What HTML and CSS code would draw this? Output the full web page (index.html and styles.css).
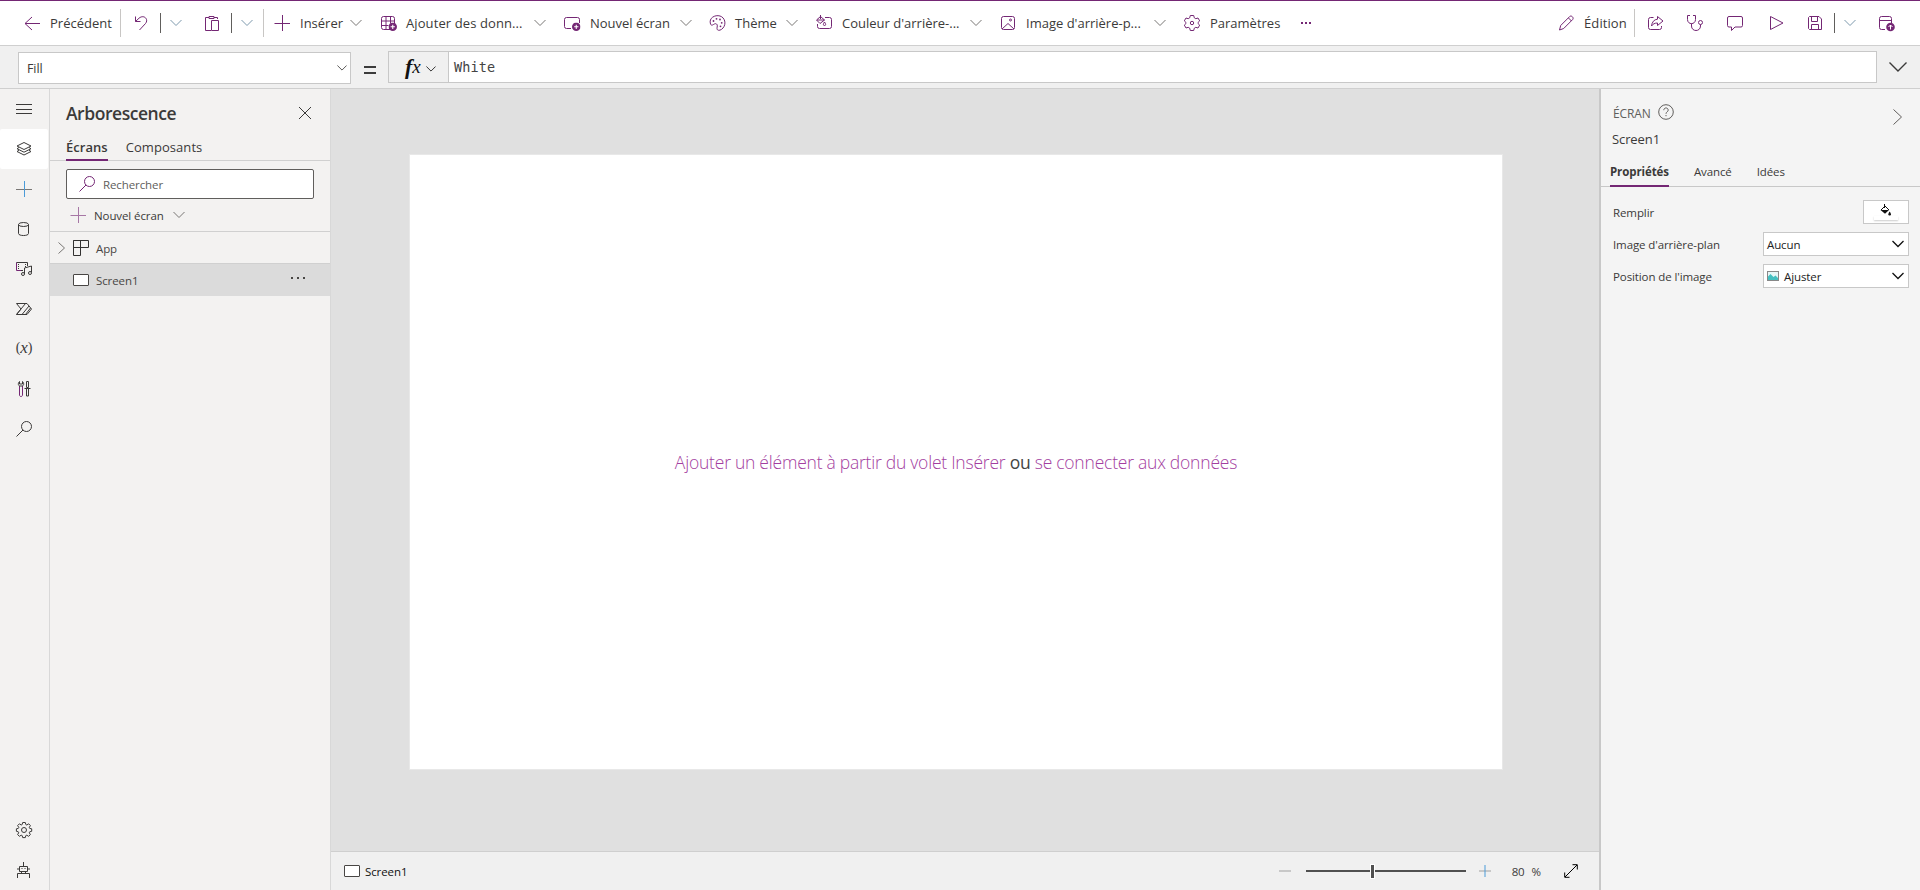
FILE: index.html
```
<!DOCTYPE html>
<html lang="fr">
<head>
    <meta charset="UTF-8">
    <meta name="viewport" content="width=device-width, initial-scale=1.0">
    <title>Power Apps Studio</title>
    <link rel="stylesheet" href="styles.css">
</head>
<body>
    <svg class="sprite">
        <symbol id="chevron" viewBox="0 0 12 12"><path d="M.5 3 6 8.500 11.500 3"/></symbol>
        <symbol id="plus" viewBox="0 0 16 16"><path d="M8.500 0v16M.5 8.500h16"/></symbol>
        <symbol id="search" viewBox="0 0 16 16"><circle cx="10.500" cy="5.500" r="5"/><path d="M7 9 .5 15.500"/></symbol>
        <symbol id="badge" viewBox="0 0 8 8"><circle cx="4" cy="4" r="4" fill="#742774" stroke="none"/><path d="M4 2v4M2 4h4" stroke="#fff"/></symbol>
    </svg>

    <div class="toolbar">
        <div class="cmd cmd-back">
            <svg class="icon"><path d="M16 8.500H1M8 2 1 8.500 8 15"/></svg>
            <span>Précédent</span>
        </div>
        <div class="sep"></div>
        <svg class="icon icon-undo"><path d="M2.500 1.500v5h5M2.500 6.500 6 3.200C11-1 16 4.500 12.500 8.500L6.500 15"/></svg>
        <div class="sep-dark"></div>
        <svg class="chev chev-blue"><use href="#chevron"/></svg>
        <svg class="icon icon-paste"><path d="M5 2.500H1.500v13H7M10 2.500h3.500V4M5 1.500h5v2H5zM7.500 5.500h7v10h-7z"/></svg>
        <div class="sep-dark"></div>
        <svg class="chev chev-blue"><use href="#chevron"/></svg>
        <div class="sep sep-insert"></div>
        <div class="cmd cmd-insert">
            <svg class="icon"><use href="#plus"/></svg>
            <span>Insérer</span>
            <svg class="chev"><use href="#chevron"/></svg>
        </div>
        <div class="cmd cmd-data">
            <svg class="icon"><rect x=".5" y="1.500" width="13" height="13" rx="2"/><path d="M5 1.500v13M9.500 1.500v7M.5 6h13M.5 10.500h7"/><use href="#badge" x="7.500" y="7.500" width="8.500" height="8.500"/></svg>
            <span>Ajouter des donn...</span>
            <svg class="chev"><use href="#chevron"/></svg>
        </div>
        <div class="cmd cmd-screen">
            <svg class="icon"><path d="M7 13.500H2.500a2 2 0 0 1-2-2v-7a2 2 0 0 1 2-2h11a2 2 0 0 1 2 2V8"/><use href="#badge" x="8" y="7.500" width="8.500" height="8.500"/></svg>
            <span>Nouvel écran</span>
            <svg class="chev"><use href="#chevron"/></svg>
        </div>
        <div class="cmd cmd-theme">
            <svg class="icon"><path d="M1.500 9C-.5 3 6-.5 11 1c5 1.500 6.500 8 3 12-2.500 3-6 3-6 .5 0-2 1-3.500-.5-4.500S5 9.500 3.500 10c-1 .3-1.700 0-2-1z"/><g class="dots"><circle cx="4.500" cy="6" r=".9"/><circle cx="7.500" cy="3.800" r=".9"/><circle cx="11" cy="4.500" r=".9"/><circle cx="12.700" cy="7.800" r=".9"/><circle cx="11.500" cy="11.300" r=".9"/></g></svg>
            <span>Thème</span>
            <svg class="chev"><use href="#chevron"/></svg>
        </div>
        <div class="cmd cmd-color">
            <svg class="icon"><path d="M9 2.500h4.500a2 2 0 0 1 2 2v7a2 2 0 0 1-2 2h-10a2 2 0 0 1-2-2V9M4.500 0v4M4.500 1.500 .5 5l3.500 3.500L8.500 5zM1 5h7.500M8.500 7c-1.500 2-1.500 3.500 0 3.500s1.500-1.500 0-3.500z"/></svg>
            <span>Couleur d'arrière-...</span>
            <svg class="chev"><use href="#chevron"/></svg>
        </div>
        <div class="cmd cmd-image">
            <svg class="icon"><rect x="1.500" y="1.500" width="13" height="13" rx="2"/><path d="m2 14 6-5.500 6 5.500"/><circle cx="10.500" cy="5" r="1"/></svg>
            <span>Image d'arrière-p...</span>
            <svg class="chev"><use href="#chevron"/></svg>
        </div>
        <div class="cmd cmd-settings">
            <svg class="icon"><path d="M6.300.5h3.400l.6 2.300 1.500.9 2.200-.7 1.700 2.900-1.700 1.600v1l1.700 1.600-1.700 2.900-2.200-.7-1.500.9-.6 2.300H6.300l-.6-2.300-1.500-.9-2.200.7L.3 10.100 2 8.500v-1L.3 5.900 2 3l2.200.7 1.500-.9z"/><circle cx="8" cy="8" r="1.700"/></svg>
            <span>Paramètres</span>
        </div>
        <svg class="more" viewBox="0 0 10 2"><path d="M0 1h2M4 1h2M8 1h2"/></svg>

        <div class="toolbar-right">
            <div class="cmd cmd-edit">
                <svg class="icon"><path d="m1.500 15 1.200-4.500 9-9c1.500-1.500 4.500 1 3 3l-9 9zM10.500 3l3 3"/></svg>
                <span>Édition</span>
            </div>
            <div class="sep"></div>
            <svg class="icon icon-share"><path d="M5.500 2.500h-3a2 2 0 0 0-2 2v8a2 2 0 0 0 2 2h9a2 2 0 0 0 2-2V11M9.500 1.500 15 6l-5.500 4.500V8C6.500 8 5 9 3.500 11 4 7 6 4.500 9.500 4.200z"/></svg>
            <svg class="icon icon-check"><path d="M3 .5H.5v4C.5 10 8.500 10 8.500 4.500v-4H6M4.500 8.500V11c0 6 9 6 9 0V9.500"/><circle cx="13.500" cy="7.500" r="2"/></svg>
            <svg class="icon icon-comment"><path d="M2 1.500h12A1.500 1.500 0 0 1 15.500 3v7.500A1.500 1.500 0 0 1 14 12H8l-3.500 3.500V12H2A1.500 1.500 0 0 1 .5 10.500V3A1.500 1.500 0 0 1 2 1.500z"/></svg>
            <svg class="icon icon-play"><path d="M2.500 1.500v13l12.500-6.500z"/></svg>
            <svg class="icon icon-save"><path d="M2.500 1.500h9.500l2.500 2.500v10.500h-12l-1-1v-11zM4.500 1.500v5h6v-5M4.500 14.500v-5h7v5"/></svg>
            <div class="sep-dark"></div>
            <svg class="chev chev-blue"><use href="#chevron"/></svg>
            <svg class="icon icon-publish"><path d="M7 14.500H3.500a2 2 0 0 1-2-2v-9a2 2 0 0 1 2-2h8a2 2 0 0 1 2 2V8M1.500 5.500h12"/><circle cx="12.500" cy="12" r="4.300" fill="#742774" stroke="none"/><path d="M12.500 14.500V10m-2 2 2-2 2 2" stroke="#fff"/></svg>
        </div>
    </div>

    <div class="formula-bar">
        <div class="property-select">
            <span>Fill</span>
            <svg class="chev-small" viewBox="0 0 12 12"><use href="#chevron"/></svg>
        </div>
        <svg class="equal" viewBox="0 0 12 8"><path d="M0 1h12M0 7h12"/></svg>
        <div class="fx"><i>f</i><em>x</em><svg class="chev-small" viewBox="0 0 12 12"><use href="#chevron"/></svg></div>
        <div class="formula">White</div>
        <svg class="expand-formula" viewBox="0 0 18 10"><path d="m.5.500 8.500 8.500L17.500.500"/></svg>
    </div>

    <div class="main">
        <div class="rail">
            <div class="rail-item"><svg class="icon"><path d="M0 3.500h16M0 8.500h16M0 12.500h16"/></svg></div>
            <div class="rail-item active"><svg class="icon"><path d="m8 1.500 7 3.500-7 3.500L1 5zM3 6.500 1 7.700l7 3.500 7-3.500-2-1.200M3 9.300l-2 1.200L8 14l7-3.500-2-1.200"/></svg></div>
            <div class="rail-item"><svg class="icon rail-plus"><path d="M0 8.500h16"/><path class="blue" d="M8.500 0v16"/></svg></div>
            <div class="rail-item"><svg class="icon"><path d="M2.500 3.500v9c0 2.700 10 2.700 10 0v-9"/><ellipse cx="7.500" cy="3.500" rx="5" ry="2"/></svg></div>
            <div class="rail-item"><svg class="icon"><path class="purple" d="M5 9.500H.5v-8"/><path d="M.5 1.500h11V5M5 9.500h2M8.500 13V7l7-2v6"/><path stroke-dasharray="1 1" d="M2.500 3v6M9.500 3v3"/><circle cx="7" cy="13" r="1.500"/><circle cx="14" cy="12" r="1.500"/></svg></div>
            <div class="rail-item"><svg class="icon"><path d="M.5 2.500H11L15.500 8 11 13.500H.5L5 8zM.5 13.500l9-11M6 13.500 13 5M9.500 13.500l5-6.500"/></svg></div>
            <div class="rail-item variable">(<i>x</i>)</div>
            <div class="rail-item"><svg class="icon"><path class="purple" d="M3.500 5v9c0 2 3 2 3 0V5"/><path d="M3.500.5c-2 2-1.200 4.500.5 4.500h2c1.700 0 2.500-2.500.5-4.500V3h-3zM10.500.500h2v6h-2zM8.500 7.500h6M10.500 8v7h2V8"/></svg></div>
            <div class="rail-item"><svg class="icon"><use href="#search"/></svg></div>
            <div class="rail-item rail-bottom"><svg class="icon"><path d="m6.700.5 2.600 0 .5 2 1 .5 1.900-1.200 1.700 1.800-1.100 1.800.4 1 2 .4v2.500l-2 .5-.4 1 1.100 1.800-1.800 1.700-1.800-1.100-1 .4-.5 2H6.700l-.5-2-1-.4-1.800 1.100-1.800-1.700 1.100-1.800-.4-1-1.900-.5V6.800l1.900-.4.5-1-1.200-1.800L3.400 1.800 5.200 3l1-.5z"/><circle cx="8" cy="8" r="2.500"/></svg></div>
            <div class="rail-item"><svg class="icon"><path d="M3.500 4.500h8v5h-8zM7.500 0v4M1.500 16v-4.500h12V16M5.500 9.500v2M9.500 9.500v2M2 6v2M13 6v2M5.500 6.500h1M8.500 6.500h1"/></svg></div>
        </div>

        <div class="tree">
            <div class="tree-header">
                <h2>Arborescence</h2>
                <svg class="close" viewBox="0 0 12 12"><path d="m0 0 12 12M12 0 0 12"/></svg>
            </div>
            <div class="tree-tabs">
                <div class="tab selected">Écrans</div>
                <div class="tab">Composants</div>
            </div>
            <div class="search-box">
                <svg class="icon"><use href="#search"/></svg>
                <span>Rechercher</span>
            </div>
            <div class="new-screen">
                <svg class="icon"><use href="#plus"/></svg>
                <span>Nouvel écran</span>
                <svg class="chev"><use href="#chevron"/></svg>
            </div>
            <div class="tree-row">
                <svg class="caret" viewBox="0 0 7 12"><path d="m.5.500 6 5.500-6 5.500"/></svg>
                <svg class="icon"><path d="M.5.500h15v7H.5zM7.500.5v15h-7V.5"/></svg>
                <span>App</span>
            </div>
            <div class="tree-row tree-selected">
                <div class="screen-icon"></div>
                <span>Screen1</span>
                <svg class="more" viewBox="0 0 14 2"><path d="M0 1h2M6 1h2M12 1h2"/></svg>
            </div>
        </div>

        <div class="workspace">
            <div class="stage">
                <div class="canvas">
                    <p><span class="link">Ajouter un élément à partir du volet Insérer</span> <span class="or">ou</span> <span class="link">se connecter aux données</span></p>
                </div>
            </div>
            <div class="status">
                <div class="screen-icon"></div>
                <span class="status-name">Screen1</span>
                <svg class="zoom-out" viewBox="0 0 12 12"><path d="M0 6h12"/></svg>
                <div class="slider"><div class="thumb"></div></div>
                <svg class="zoom-in" viewBox="0 0 12 12"><path d="M0 6h12"/><path class="blue" d="M6 0v12"/></svg>
                <span class="percent">80</span><span>%</span>
                <svg class="fit" viewBox="0 0 14 14"><path d="M1 13 13 1M8.500.700h4.800v4.800M.7 8.500v4.800h4.800"/></svg>
            </div>
        </div>

        <div class="props">
            <div class="props-type">
                <span>ÉCRAN</span>
                <svg class="help" viewBox="0 0 16 16"><circle cx="8" cy="8" r="7.300"/><path d="M5.800 6.200c0-3 4.400-3 4.400 0C10.200 7.800 8 7.800 8 9.800M8 11v1.200"/></svg>
                <svg class="collapse" viewBox="0 0 9 16"><path d="m.5.500 8 7.500-8 7.500"/></svg>
            </div>
            <div class="props-name">Screen1</div>
            <div class="props-tabs">
                <div class="tab selected">Propriétés</div>
                <div class="tab">Avancé</div>
                <div class="tab">Idées</div>
            </div>
            <div class="prop">
                <span>Remplir</span>
                <div class="fill-button">
                    <svg viewBox="0 0 12 12"><path d="M4.500 0v4M1 6l4-4 4 4" fill="none"/><path class="solid" d="M.5 6h8.500L5 9.800zM9.700 7.500c-2.200 3-1.500 4 0 4s2-1 0-4z"/></svg>
                    <div class="swatch"></div>
                </div>
            </div>
            <div class="prop">
                <span>Image d'arrière-plan</span>
                <div class="select">Aucun<svg class="chev"><use href="#chevron"/></svg></div>
            </div>
            <div class="prop">
                <span>Position de l'image</span>
                <div class="select">
                    <svg class="picture" viewBox="0 0 12 10"><rect x=".5" y=".5" width="11" height="9" fill="#e6f6f7" stroke="#888"/><path d="M1 5.500 3.500 3l3 3 2-1.500L11 7v2H1z" fill="#43bfc0" stroke="none"/></svg>
                    Ajuster<svg class="chev"><use href="#chevron"/></svg>
                </div>
            </div>
        </div>
    </div>
</body>
</html>
```
FILE: styles.css
```
* {
    box-sizing: border-box;
}
body {
    display: flex;
    flex-direction: column;
    height: 100vh;
    margin: 0;
    overflow: hidden;
    background-color: #f3f2f1;
    color: #3b3a39;
    font-family: "Open Sans", "Noto Sans", sans-serif;
    font-size: 11.5px;
    letter-spacing: -0.1px;
    white-space: nowrap;
}
svg {
    display: block;
    flex: none;
    fill: none;
    stroke: currentColor;
}
.sprite {
    position: absolute;
    width: 0;
    height: 0;
}
.icon {
    width: 16px;
    height: 16px;
    overflow: visible;
}
.chev {
    width: 12px;
    height: 12px;
    color: #797775;
}
.chev-blue {
    color: #7c98ac;
}
.blue {
    stroke: #4a9bd8;
}
.purple {
    stroke: #742774;
}
.dots {
    fill: currentColor;
    stroke: none;
}

/* command bar */
.toolbar {
    display: flex;
    align-items: center;
    flex: none;
    height: 46px;
    border-top: 1px solid #742774;
    border-bottom: 1px solid #cfcfcf;
    background-color: #fff;
}
.toolbar .icon, .toolbar .more {
    color: #742774;
}
.cmd {
    display: flex;
    align-items: center;
    flex: none;
    font-size: 13px;
    letter-spacing: 0;
}
.cmd span {
    margin-left: 10px;
}
.cmd .chev {
    margin-left: auto;
}
.cmd-back {
    width: 88px;
    margin-left: 24px;
}
.cmd-insert {
    width: 88px;
    margin-left: 10px;
}
.cmd-data {
    width: 165px;
    margin-left: 19px;
}
.cmd-data span {
    margin-left: 9px;
    letter-spacing: 0.1px;
}
.cmd-screen {
    width: 128px;
    margin-left: 18px;
}
.cmd-theme {
    width: 89px;
    margin-left: 17px;
}
.cmd-color {
    width: 166px;
    margin-left: 18px;
}
.cmd-image {
    width: 166px;
    margin-left: 18px;
}
.cmd-settings {
    width: 94px;
    margin-left: 18px;
}
.cmd-edit {
    width: 67px;
}
.cmd-edit span {
    letter-spacing: 0.1px;
}
.sep {
    width: 1px;
    height: 28px;
    margin-left: 8px;
    background-color: #c8c6c4;
}
.sep-insert {
    margin-left: 10px;
}
.sep-dark {
    width: 1px;
    height: 20px;
    margin: 0 9px 0 11px;
    background-color: #605e5c;
}
.icon-undo {
    margin-left: 12px;
}
.icon-paste {
    margin-left: 22px;
}
.toolbar .more {
    width: 10px;
    height: 2px;
    margin-left: 23px;
    stroke-width: 2;
}
.toolbar-right {
    display: flex;
    align-items: center;
    margin-left: auto;
    padding-right: 26px;
}
.toolbar-right .sep {
    margin-left: 9px;
}
.icon-share {
    margin-left: 13px;
}
.icon-check, .icon-save {
    margin-left: 23px;
}
.icon-comment {
    margin-left: 24px;
}
.icon-play {
    margin-left: 25px;
}
.icon-publish {
    margin-left: 22px;
}

/* formula bar */
.formula-bar {
    display: flex;
    align-items: flex-start;
    flex: none;
    height: 43px;
    padding: 5px 13px 0 18px;
    border-bottom: 1px solid #cfcfcf;
    background-color: #f0f0f0;
}
.property-select {
    display: flex;
    align-items: center;
    justify-content: space-between;
    width: 333px;
    height: 32px;
    margin-top: 1px;
    padding: 0 3px 0 8px;
    border: 1px solid #c8c8c8;
    background-color: #fff;
    font-size: 12.5px;
}
.chev-small {
    width: 10px;
    height: 10px;
}
.equal {
    width: 12px;
    height: 8px;
    margin: 15px 12px 0 13px;
    color: #000;
    stroke-width: 1.5;
}
.fx {
    display: flex;
    align-items: center;
    width: 61px;
    height: 32px;
    padding-left: 16px;
    border: 1px solid #c8c8c8;
    color: #111;
    font-family: "Liberation Serif", serif;
    font-size: 22px;
    line-height: 28px;
}
.fx i {
    font-weight: 700;
}
.fx em {
    font-size: 19px;
}
.fx .chev-small {
    margin: 3px 0 0 5px;
}
.formula {
    flex: 1;
    height: 32px;
    margin-left: -1px;
    padding-left: 5px;
    border: 1px solid #c8c8c8;
    background-color: #fff;
    color: #444;
    font-family: "DejaVu Sans Mono", monospace;
    font-size: 13.5px;
    letter-spacing: 0.1px;
    line-height: 31px;
}
.expand-formula {
    width: 18px;
    height: 10px;
    margin: 11px 0 0 12px;
    stroke-width: 1.4;
}

.main {
    display: flex;
    flex: 1;
    min-height: 0;
}

/* left rail */
.rail {
    display: flex;
    flex-direction: column;
    width: 50px;
    border-right: 1px solid #d8d8d8;
}
.rail-item {
    display: flex;
    align-items: center;
    justify-content: center;
    width: 48px;
    height: 40px;
}
.active {
    border-radius: 2px;
    background-color: #fff;
}
.rail-plus {
    color: #797775;
}
.rail-bottom {
    margin-top: auto;
}
.variable {
    padding-bottom: 3px;
    font-family: "Liberation Serif", serif;
    font-size: 14px;
}
.variable i {
    font-size: 17px;
}

/* tree view */
.tree {
    width: 281px;
    border-right: 1px solid #d8d8d8;
}
.tree-header {
    display: flex;
    align-items: center;
    justify-content: space-between;
    height: 48px;
    padding: 0 19px 0 16px;
}
h2 {
    margin: 0;
    font-size: 17.5px;
    font-weight: 600;
    letter-spacing: -0.45px;
}
.close {
    width: 12px;
    height: 12px;
}
.tree-tabs {
    display: flex;
    height: 24px;
    padding-left: 16px;
    border-bottom: 1px solid #d0d0d0;
    font-size: 13px;
    letter-spacing: 0.05px;
    line-height: 20px;
}
.tree-tabs .tab {
    margin-right: 18px;
}
.tree-tabs .selected {
    height: 24px;
    border-bottom: 2px solid #742774;
    font-weight: 600;
}
.search-box {
    display: flex;
    align-items: center;
    width: 248px;
    height: 30px;
    margin: 8px 0 0 16px;
    padding-left: 12px;
    border: 1px solid #605e5c;
    border-radius: 2px;
    background-color: #fff;
    color: #605e5c;
}
.search-box span {
    margin: 1px 0 0 8px;
}
.search-box .icon, .new-screen .icon {
    color: #742774;
}
.new-screen {
    display: flex;
    align-items: center;
    height: 33px;
    padding-left: 20px;
    border-bottom: 1px solid #d0d0d0;
}
.new-screen .icon {
    opacity: 0.6;
}
.new-screen span {
    margin: 0 9px 0 8px;
}
.tree-row {
    display: flex;
    align-items: center;
    height: 31px;
    padding-left: 8px;
    color: #484644;
}
.tree-row span {
    margin: 2px 0 0 7px;
}
.tree-row .icon {
    margin-left: 8px;
    color: #323130;
}
.caret {
    width: 7px;
    height: 12px;
    color: #797775;
}
.tree-selected {
    height: 33px;
    padding: 0 25px 1px 23px;
    border-top: 1px solid #d0d0d0;
    background-color: #dbdbdb;
}
.tree-selected .more {
    width: 14px;
    height: 2px;
    margin: 0 0 3px auto;
    stroke-width: 2;
}
.screen-icon {
    width: 16px;
    height: 12px;
    border: 1px solid #484644;
    border-radius: 1px;
    background-color: #fff;
}

/* design surface */
.workspace {
    display: flex;
    flex-direction: column;
    flex: 1;
}
.stage {
    flex: 1;
    padding: 65px 96px 0 78px;
    background-color: #e0e0e0;
}
.canvas {
    display: flex;
    align-items: center;
    justify-content: center;
    height: 616px;
    border: 1px solid #e8e8e8;
    background-color: #fff;
}
.canvas p {
    margin: 0;
    font-size: 17.5px;
    letter-spacing: -0.2px;
    word-spacing: -0.2px;
}
.link {
    color: #a33ea0;
    font-weight: 300;
}
.or {
    color: #444;
}
.status {
    display: flex;
    align-items: center;
    height: 39px;
    padding: 0 21px 0 13px;
    border-top: 1px solid #cfcfcf;
    background-color: #f0f0f0;
}
.status-name {
    margin-left: 5px;
    color: #111;
}
.zoom-out, .zoom-in {
    width: 12px;
    height: 12px;
    color: #a0a0a0;
}
.zoom-out {
    margin-left: auto;
}
.slider {
    display: flex;
    align-items: center;
    width: 160px;
    height: 2px;
    margin: 0 13px 0 15px;
    background-color: #505050;
}
.thumb {
    width: 5px;
    height: 15px;
    margin-left: 64px;
    border: 1px solid #fff;
    background-color: #505050;
}
.percent {
    margin: 0 7px 0 21px;
}
.fit {
    width: 14px;
    height: 14px;
    margin-left: 23px;
    color: #000;
}

/* properties panel */
.props {
    width: 321px;
    border-left: 2px solid #c8c8c8;
    background-color: #f4f4f4;
}
.props-type {
    display: flex;
    align-items: center;
    height: 45px;
    padding: 0 18px 0 12px;
    color: #605e5c;
}
.props-type span {
    margin-top: 3px;
    font-size: 12px;
}
.help {
    width: 16px;
    height: 16px;
    margin-left: 7px;
}
.collapse {
    width: 9px;
    height: 16px;
    margin: 11px 0 0 auto;
}
.props-name {
    padding-left: 11px;
    font-size: 13px;
    line-height: 10px;
}
.props-tabs {
    display: flex;
    height: 43px;
    padding-left: 9px;
    border-bottom: 1px solid #c8c8c8;
}
.props-tabs .tab {
    margin-right: 25px;
    padding-top: 20px;
}
.props-tabs .selected {
    height: 43px;
    border-bottom: 2px solid #742774;
    font-weight: 700;
}
.prop {
    display: flex;
    align-items: center;
    justify-content: space-between;
    height: 24px;
    margin: 0 11px 8px 12px;
}
.props-tabs + .prop {
    margin-top: 13px;
}
.fill-button {
    display: flex;
    flex-direction: column;
    align-items: center;
    width: 46px;
    height: 24px;
    padding-top: 3px;
    border: 1px solid #c8c8c8;
    background-color: #fff;
    color: #111;
}
.fill-button svg {
    width: 12px;
    height: 12px;
}
.solid {
    fill: #111;
    stroke: none;
}
.swatch {
    width: 24px;
    height: 4px;
    background-color: #fff;
    box-shadow: 0 1px 2px #ccc;
}
.select {
    display: flex;
    align-items: center;
    width: 146px;
    height: 24px;
    padding: 0 4px 0 3px;
    border: 1px solid #c8c8c8;
    background-color: #fff;
    color: #222;
}
.select .chev {
    margin-left: auto;
    color: #111;
    stroke-width: 1.3;
}
.picture {
    width: 12px;
    height: 10px;
    margin-right: 5px;
}
```
